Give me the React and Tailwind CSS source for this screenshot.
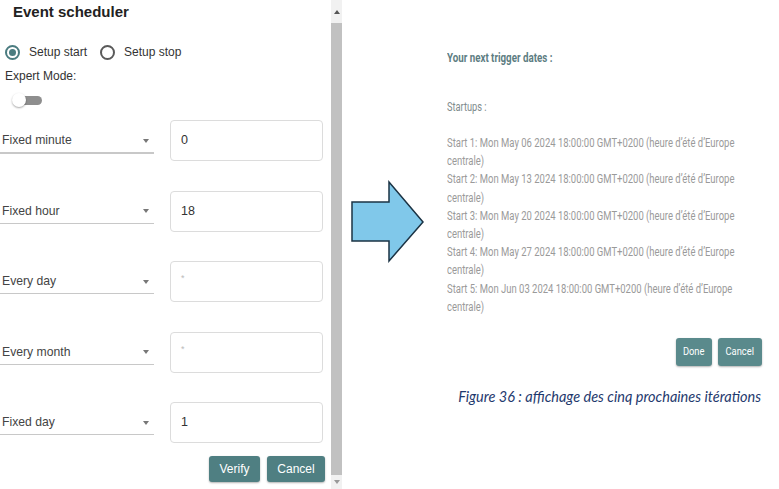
import React from 'react';

const rows = [
  { label: 'Fixed minute', value: '0', thick: true },
  { label: 'Fixed hour', value: '18' },
  { label: 'Every day', value: '' },
  { label: 'Every month', value: '' },
  { label: 'Fixed day', value: '1' },
];

const starts = [
  'Start 1: Mon May 06 2024 18:00:00 GMT+0200 (heure d\u2019été d\u2019Europe',
  'Start 2: Mon May 13 2024 18:00:00 GMT+0200 (heure d\u2019été d\u2019Europe',
  'Start 3: Mon May 20 2024 18:00:00 GMT+0200 (heure d\u2019été d\u2019Europe',
  'Start 4: Mon May 27 2024 18:00:00 GMT+0200 (heure d\u2019été d\u2019Europe',
  'Start 5: Mon Jun 03 2024 18:00:00 GMT+0200 (heure d\u2019été d\u2019Europe',
];

function Radio({ checked, label }) {
  return (
    <label className="flex items-center gap-[9px]">
      <span
        className={`flex h-[15px] w-[15px] items-center justify-center rounded-full border-2 ${
          checked ? 'border-[#4b7c80]' : 'border-[#5a5a5a]'
        }`}
      >
        {checked && <span className="h-[7px] w-[7px] rounded-full bg-[#4b7c80]" />}
      </span>
      <span className="text-[12px] text-[#333]">{label}</span>
    </label>
  );
}

function Row({ label, value, thick }) {
  return (
    <div className="flex h-[41px] items-center">
      <div className="relative h-[41px] w-[154px]">
        <div className="flex h-[41px] items-center justify-between pl-[2px] pr-[5px]">
          <span className="text-[12.2px] text-[#444]">{label}</span>
          <span className="h-0 w-0 border-x-[3.5px] border-t-[4px] border-x-transparent border-t-[#777]" />
        </div>
        <div className={`absolute left-0 right-0 top-[32px] bg-[#c8c8c8] ${thick ? 'h-[2px]' : 'h-px'}`} />
      </div>
      <div className="ml-[16px] flex h-[41px] w-[153px] items-center rounded-[4px] border border-[#dcdcdc] px-[10px]">
        {value ? (
          <span className="text-[12.5px] text-[#333]">{value}</span>
        ) : (
          <span className="-mt-[5px] text-[9px] text-[#bbb]">*</span>
        )}
      </div>
    </div>
  );
}

function Narrow({ children, className = '', scale = 'scale-x-[0.79]' }) {
  return (
    <div className={`origin-left whitespace-nowrap ${scale} ${className}`}>{children}</div>
  );
}

export default function App() {
  return (
    <div className="flex h-[489px] w-[779px] overflow-hidden bg-white font-['Liberation_Sans',Arial,sans-serif]">
      {/* left form */}
      <div className="flex w-[331px] flex-col">
        <h1 className="pl-[13px] text-[15px] font-bold leading-[24px] text-[#222]">Event scheduler</h1>
        <div className="mt-[18px] flex h-[20px] items-center gap-[13px] pl-[5px]">
          <Radio checked label="Setup start" />
          <Radio label="Setup stop" />
        </div>
        <div className="mt-[6px] pl-[5px] text-[12px] leading-[16px] text-[#333]">Expert Mode:</div>
        <div className="relative ml-[12px] mt-[9px] h-[14px] w-[30px]">
          <div className="absolute left-[8px] top-[3px] h-[9px] w-[22px] rounded-full bg-[#8e8e8e]" />
          <div className="absolute left-0 top-0 h-[14px] w-[14px] rounded-full bg-white shadow-[0_1px_2px_rgba(0,0,0,0.35)]" />
        </div>
        <div className="mt-[13px] flex flex-col gap-[29.5px]">
          {rows.map((r) => (
            <Row key={r.label} {...r} />
          ))}
        </div>
        <div className="mt-[13px] flex justify-end gap-[7px] pr-[6px]">
          <button className="h-[26px] w-[51px] rounded-[3px] bg-[#4f7f82] text-[12px] text-white shadow-[0_1px_2px_rgba(0,0,0,0.3)]">
            Verify
          </button>
          <button className="h-[26px] w-[58px] rounded-[3px] bg-[#4f7f82] text-[12px] text-white shadow-[0_1px_2px_rgba(0,0,0,0.3)]">
            Cancel
          </button>
        </div>
      </div>

      {/* scrollbar */}
      <div className="flex w-[11px] flex-col bg-[#f1f1f1]">
        <div className="flex h-[23px] items-center justify-center">
          <span className="h-0 w-0 border-x-[3px] border-b-[4px] border-x-transparent border-b-[#555]" />
        </div>
        <div className="h-[452px] bg-[#c1c1c1]" />
        <div className="flex flex-1 items-center justify-center">
          <span className="h-0 w-0 border-x-[3px] border-t-[4px] border-x-transparent border-t-[#999]" />
        </div>
      </div>

      {/* arrow */}
      <div className="w-[105px] pl-[9px] pt-[180px]">
        <svg width="75" height="84" viewBox="0 0 75 84">
          <polygon
            points="1,22 38,22 38,2 72,42 38,81 38,61 1,61"
            fill="#80c8ea"
            stroke="#1b3344"
            strokeWidth="1.5"
            strokeLinejoin="miter"
          />
        </svg>
      </div>

      {/* result */}
      <div className="flex w-[316px] flex-col pt-[50px] font-['Roboto',sans-serif]">
        <Narrow className="text-[12.5px] font-bold leading-[16px] text-[#5d7d82]" scale="scale-x-[0.78]">
          Your next trigger dates :
        </Narrow>
        <Narrow className="mt-[33px] text-[12px] leading-[16px] text-[#808b8d]" scale="scale-x-[0.77]">
          Startups :
        </Narrow>
        <div className="mt-[19px] flex flex-col">
          {starts.map((s) => (
            <React.Fragment key={s}>
              <Narrow className="text-[12px] leading-[18.2px] text-[#9a9a9a]">{s}</Narrow>
              <Narrow className="text-[12px] leading-[18.2px] text-[#9a9a9a]">centrale)</Narrow>
            </React.Fragment>
          ))}
        </div>
        <div className="mt-[22px] flex justify-end gap-[6px] pr-[1px]">
          <button className="flex h-[28px] w-[36px] items-center justify-center rounded-[3px] bg-[#5a8a8c] text-[11px] text-white shadow-[0_1px_2px_rgba(0,0,0,0.3)]">
            <span className="inline-block scale-x-[0.85]">Done</span>
          </button>
          <button className="flex h-[28px] w-[44px] items-center justify-center rounded-[3px] bg-[#5a8a8c] text-[11px] text-white shadow-[0_1px_2px_rgba(0,0,0,0.3)]">
            <span className="inline-block scale-x-[0.85]">Cancel</span>
          </button>
        </div>
        <p className="mt-[23px] whitespace-nowrap pr-[2px] text-right font-['Lato','Open_Sans',sans-serif] text-[14.5px] italic leading-[16px] text-[#1f3a6e]">
          Figure 36 : affichage des cinq prochaines itérations
        </p>
      </div>
    </div>
  );
}
